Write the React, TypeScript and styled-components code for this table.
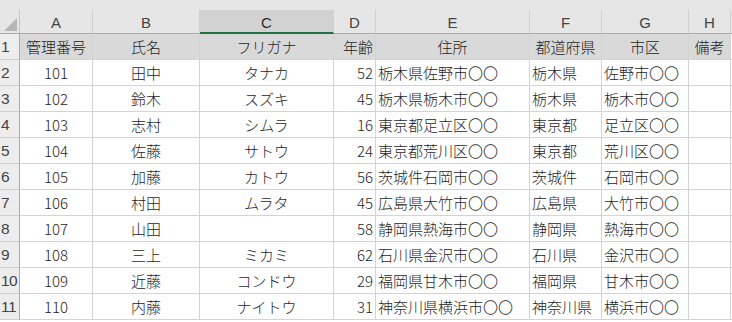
import React from "react";
import styled, { createGlobalStyle, css } from "styled-components";

const GlobalStyle = createGlobalStyle`
  html, body { margin: 0; padding: 0; background: #ffffff; }
  body { font-family: "Noto Sans CJK JP", "Noto Sans", sans-serif; }
`;

type Align = "left" | "center" | "right";

const columns = [
  { key: "A", width: 73 },
  { key: "B", width: 107 },
  { key: "C", width: 134 },
  { key: "D", width: 42 },
  { key: "E", width: 154 },
  { key: "F", width: 72 },
  { key: "G", width: 87 },
  { key: "H", width: 42 },
];

const headAlign: Align[] = ["center", "center", "center", "right", "center", "center", "center", "center"];
const bodyAlign: Align[] = ["center", "center", "center", "right", "left", "left", "left", "left"];

const header = ["管理番号", "氏名", "フリガナ", "年齢", "住所", "都道府県", "市区", "備考"];

const rows: string[][] = [
  ["101", "田中", "タナカ", "52", "栃木県佐野市〇〇", "栃木県", "佐野市〇〇", ""],
  ["102", "鈴木", "スズキ", "45", "栃木県栃木市〇〇", "栃木県", "栃木市〇〇", ""],
  ["103", "志村", "シムラ", "16", "東京都足立区〇〇", "東京都", "足立区〇〇", ""],
  ["104", "佐藤", "サトウ", "24", "東京都荒川区〇〇", "東京都", "荒川区〇〇", ""],
  ["105", "加藤", "カトウ", "56", "茨城件石岡市〇〇", "茨城件", "石岡市〇〇", ""],
  ["106", "村田", "ムラタ", "45", "広島県大竹市〇〇", "広島県", "大竹市〇〇", ""],
  ["107", "山田", "", "58", "静岡県熱海市〇〇", "静岡県", "熱海市〇〇", ""],
  ["108", "三上", "ミカミ", "62", "石川県金沢市〇〇", "石川県", "金沢市〇〇", ""],
  ["109", "近藤", "コンドウ", "29", "福岡県甘木市〇〇", "福岡県", "甘木市〇〇", ""],
  ["110", "内藤", "ナイトウ", "31", "神奈川県横浜市〇〇", "神奈川県", "横浜市〇〇", ""],
];

const Sheet = styled.div`
  width: 732px;
  height: 322px;
  overflow: hidden;
  background: #ffffff;
`;

const TopStrip = styled.div`
  height: 10px;
  background: #e6e6e6;
`;

const Grid = styled.div`
  display: grid;
  grid-template-columns: 20px ${columns.map((c) => `${c.width}px`).join(" ")} 1fr;
  grid-template-rows: 24px repeat(11, 26px);
  font-size: 15px;
  line-height: 1;
`;

const Corner = styled.div`
  position: relative;
  background: #e6e6e6;
  border-right: 1px solid #c6c6c6;
  border-bottom: 1px solid #ababab;
  box-sizing: border-box;
`;

const CornerMark = styled.svg`
  position: absolute;
  right: 2px;
  bottom: 2px;
`;

const ColHeader = styled.div<{ $selected?: boolean }>`
  box-sizing: border-box;
  display: flex;
  align-items: center;
  justify-content: center;
  color: #444444;
  font-family: "Liberation Sans", "Noto Sans", sans-serif;
  font-size: 15px;
  background: #e6e6e6;
  border-right: 1px solid #d0d0d0;
  border-bottom: 1px solid #ababab;
  padding-top: 1px;
  ${(p) =>
    p.$selected &&
    css`
      background: #d2d2d2;
      color: #2b2b2b;
      border-bottom: 2px solid #217346;
      padding-top: 2px;
    `}
`;

const RowHeader = styled.div`
  box-sizing: border-box;
  display: flex;
  align-items: center;
  padding-left: 1px;
  color: #444444;
  font-family: "Liberation Sans", "Noto Sans", sans-serif;
  font-size: 15.5px;
  letter-spacing: -0.5px;
  background: #ededed;
  border-right: 1px solid #ababab;
  border-bottom: 1px solid #d0d0d0;
`;

const Cell = styled.div<{ $align: Align; $head?: boolean }>`
  box-sizing: border-box;
  display: flex;
  align-items: center;
  white-space: nowrap;
  overflow: hidden;
  padding: 0 2px 0 2px;
  color: #1e1e1e;
  font-weight: 300;
  border-right: 1px solid #d4d4d4;
  border-bottom: 1px solid #d4d4d4;
  background: ${(p) => (p.$head ? "#d9d9d9" : "#ffffff")};
  justify-content: ${(p) =>
    p.$align === "left" ? "flex-start" : p.$align === "right" ? "flex-end" : "center"};
`;

const Filler = styled.div<{ $top?: boolean }>`
  background: ${(p) => (p.$top ? "#e6e6e6" : "#ffffff")};
  border-bottom: 1px solid ${(p) => (p.$top ? "#ababab" : "#d4d4d4")};
  box-sizing: border-box;
`;

export default function App() {
  return (
    <>
      <GlobalStyle />
      <Sheet>
        <TopStrip />
        <Grid>
          <Corner>
            <CornerMark width="13" height="13" viewBox="0 0 13 13">
              <polygon points="13,0 13,13 0,13" fill="#b5b5b5" />
            </CornerMark>
          </Corner>
          {columns.map((c) => (
            <ColHeader key={c.key} $selected={c.key === "C"}>
              {c.key}
            </ColHeader>
          ))}
          <Filler $top />

          <RowHeader>1</RowHeader>
          {header.map((h, i) => (
            <Cell key={i} $align={headAlign[i]} $head>
              {h}
            </Cell>
          ))}
          <Filler />

          {rows.map((r, ri) => (
            <React.Fragment key={ri}>
              <RowHeader>{ri + 2}</RowHeader>
              {r.map((v, ci) => (
                <Cell key={ci} $align={bodyAlign[ci]}>
                  {v}
                </Cell>
              ))}
              <Filler />
            </React.Fragment>
          ))}
        </Grid>
      </Sheet>
    </>
  );
}
